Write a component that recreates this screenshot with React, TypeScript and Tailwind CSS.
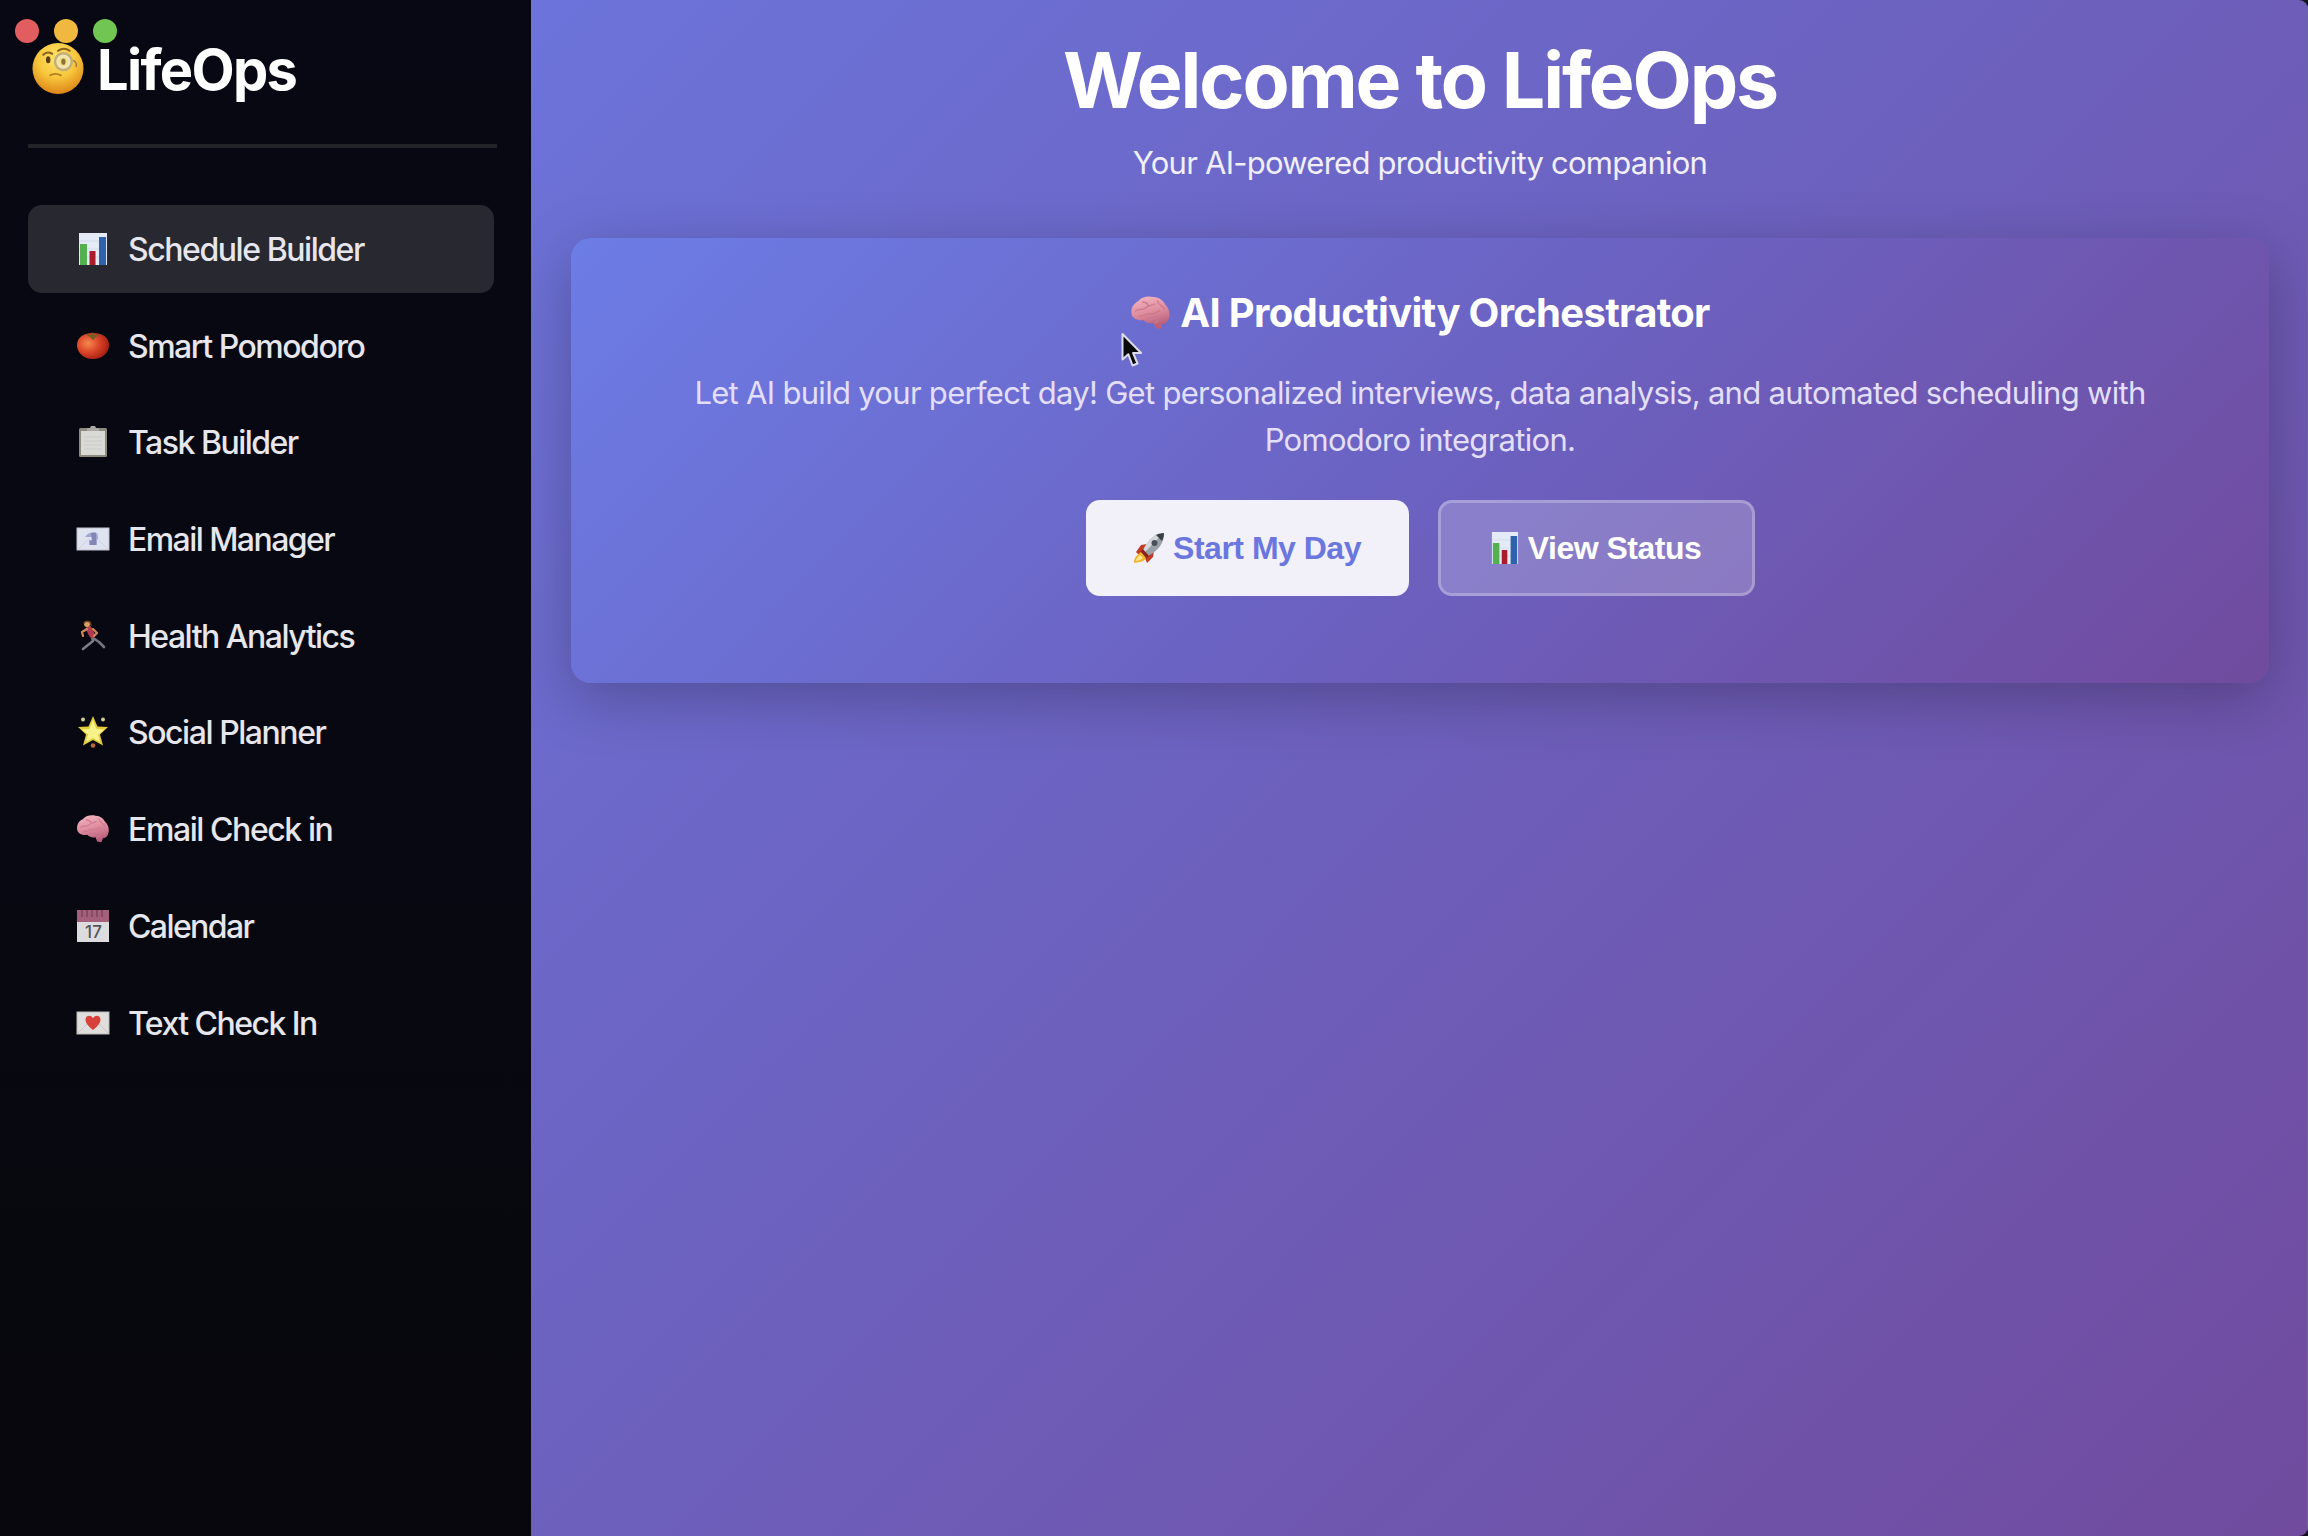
import type { ReactNode } from "react";

type IconProps = { className?: string };

const ChartIcon = ({ className }: IconProps) => (
  <svg viewBox="0 0 30 34" className={className} preserveAspectRatio="none">
    <rect x="1" y="1" width="28" height="32" fill="#e4ebf6" />
    <path d="M1 9H29M1 17H29M1 25H29" stroke="#d3dcea" strokeWidth="1" />
    <rect x="2" y="12" width="7" height="21" fill="#55b04f" />
    <rect x="11.500" y="19" width="6" height="14" fill="#a81c2c" />
    <rect x="21" y="5" width="7" height="28" fill="#2f62ad" />
  </svg>
);

const TomatoIcon = ({ className }: IconProps) => (
  <svg viewBox="0 0 34 34" className={className}>
    <defs>
      <radialGradient id="tomato" cx="35%" cy="40%" r="70%">
        <stop offset="0" stopColor="#f58a4e" />
        <stop offset=".45" stopColor="#dd4a2c" />
        <stop offset="1" stopColor="#a3190f" />
      </radialGradient>
    </defs>
    <path d="M1 16C1 8 8 4 17 4s16 4 16 12-7 14-16 14S1 24 1 16Z" fill="url(#tomato)" />
    <path d="M9 5l6 1 1-3 3 3 6-1-5 3-3 3-3-3Z" fill="#7a5a25" />
  </svg>
);

const ClipboardIcon = ({ className }: IconProps) => (
  <svg viewBox="0 0 30 34" className={className}>
    <rect x="1" y="3" width="28" height="29" rx="1.500" fill="#8e8a80" />
    <rect x="3" y="6" width="24" height="24" fill="#d9d9d6" />
    <path d="M9 6V3h3l1-2h4l1 2h3v3Z" fill="#aaa9a5" />
    <path d="M6 12H24M6 16H24M6 20H24M6 24H24" stroke="#cbcbc9" strokeWidth="1" />
  </svg>
);

const EmailIcon = ({ className }: IconProps) => (
  <svg viewBox="0 0 34 24" className={className}>
    <rect x="1" y="1" width="32" height="22" fill="#dfe2ef" stroke="#c0c3d2" />
    <path d="M2 22L13 12M32 22L21 12" stroke="#cfd2e2" />
    <path d="M9 10c3-4 6-4.500 9-5 3 0 4 3 4 5v2h-1v6h-8v-5h4v-3Z" fill="#a3a5d2" />
    <path d="M15 6h5v12h-6v-4h2Z" fill="#8386b5" />
  </svg>
);

const RunnerIcon = ({ className }: IconProps) => (
  <svg viewBox="0 0 28 32" className={className} fill="none" strokeLinecap="round" strokeLinejoin="round">
    <path d="M13 16l1 5-5 4-5 4" stroke="#7d7c80" strokeWidth="2.600" />
    <path d="M14 18l6 4 5 5" stroke="#77767c" strokeWidth="2.600" />
    <path d="M10 9l3 6" stroke="#b53a50" strokeWidth="6" />
    <path d="M8 9l-5 3 1 4M14 9l4 4-3 3" stroke="#d08a58" strokeWidth="2.200" />
    <circle cx="8" cy="4" r="3" fill="#d9a15e" />
    <path d="M5 3q2-3 6-1l1 3" stroke="#6b4027" strokeWidth="1.500" />
  </svg>
);

const StarIcon = ({ className }: IconProps) => (
  <svg viewBox="0 0 32 34" className={className}>
    <path d="M16 1l4.500 10.500L31 12l-8 7.500 3 11L16 25 6 30.500l3-11L1 12l10.500-.5Z" fill="#e3cb3e" />
    <path d="M16 5l3.500 9 8 .5-6.500 5 2.200 7.500L16 23l-7.200 4L11 19.500l-6.500-5 8-.5Z" fill="#f7f28a" />
    <circle cx="6" cy="4.500" r="2" fill="#cfd08b" />
    <circle cx="26" cy="4.500" r="2" fill="#cfd08b" />
    <circle cx="16" cy="30.500" r="2.300" fill="#b86a32" />
  </svg>
);

const BrainIcon = ({ className }: IconProps) => (
  <svg viewBox="0 0 40 36" className={className}>
    <defs>
      <linearGradient id="brain" x1="0" y1="0" x2=".3" y2="1">
        <stop offset="0" stopColor="#f4b9c2" />
        <stop offset=".55" stopColor="#e08d9f" />
        <stop offset="1" stopColor="#b9607c" />
      </linearGradient>
    </defs>
    <path
      d="M1 19C0 12 4 8 8 6 12 1 19 1 23 2c6 0 10 4 12 8 4 4 5 10 3 14-1 4-4 5-6 5l-2 5-5-1-2-5c-5 1-8-1-10-3-5 1-11-1-12-6Z"
      fill="url(#brain)"
    />
    <path
      d="M5 16c4-3 7 0 10-3s6-2 9-4M12 7c3 0 5 1 6 4M9 21c4 1 6-3 10-2s6-2 10-3M20 25c3-3 7-1 12-4M27 6c0 4 5 4 7 8M25 28l3-3"
      stroke="#cb7a90"
      strokeWidth="1.300"
      fill="none"
      strokeLinecap="round"
    />
  </svg>
);

const CalendarIcon = ({ className }: IconProps) => (
  <svg viewBox="0 0 34 34" className={className}>
    <rect x="1" y="1" width="32" height="32" fill="#dcdcdf" />
    <rect x="1" y="1" width="32" height="12" fill="#a4607a" />
    <path d="M6 1v7M11 1v7M16 1v7M21 1v7M26 1v7" stroke="#7c4460" strokeWidth="1.500" />
    <text x="17.500" y="29" textAnchor="middle" fontFamily="Inter, sans-serif" fontSize="17" fontWeight="500" fill="#55555b">
      17
    </text>
  </svg>
);

const LoveLetterIcon = ({ className }: IconProps) => (
  <svg viewBox="0 0 34 24" className={className}>
    <rect x="1" y="1" width="32" height="22" fill="#e0dedd" stroke="#bdbbb9" />
    <path d="M2 22L12 12M32 22L22 12" stroke="#cbc8c6" />
    <path d="M17 19C12 15 9.500 12 9.500 8.500c0-4 5-5 7.500-1.500 2.500-3.500 7.500-2.500 7.500 1.500C24.500 12 22 15 17 19Z" fill="#d8403a" />
  </svg>
);

const RocketIcon = ({ className }: IconProps) => (
  <svg viewBox="0 0 32 32" className={className}>
    <path d="M3 20l5-7 6-1-7 12ZM12 26l9-8-1 7-6 6Z" fill="#c33a24" />
    <path d="M31 1c-9 0-15 6-21 17l5 6C26 18 31 11 31 1Z" fill="#9aa0a8" />
    <path d="M31 1c-9 0-15 6-21 17l2 2C19 13 24 7 31 1Z" fill="#d4d8dd" />
    <path d="M31 1c-3 0-6 1-8 2l6 6c1-2 2-5 2-8Z" fill="#3b3f47" />
    <circle cx="21.500" cy="11" r="3" fill="#49505b" />
    <path d="M10 17l6 7-3 3-6-7Z" fill="#8d241d" />
    <path d="M8 20l5 6c-2 4-6 4-12 5 0-6 3-8 7-11Z" fill="#f1b52f" />
    <path d="M7 23l3 3c-2 2-4 2-7 3 0-3 2-4 4-6Z" fill="#fbe98a" />
  </svg>
);

const MonocleIcon = ({ className }: IconProps) => (
  <svg viewBox="0 0 54 54" className={className} fill="none" strokeLinecap="round">
    <defs>
      <radialGradient id="face" cx="48%" cy="30%" r="68%">
        <stop offset="0" stopColor="#fde56c" />
        <stop offset=".55" stopColor="#f8c73c" />
        <stop offset="1" stopColor="#df8a1a" />
      </radialGradient>
    </defs>
    <circle cx="27" cy="27" r="26" fill="url(#face)" />
    <path d="M12 13q4-4 9-1" stroke="#8a611e" strokeWidth="2.200" />
    <ellipse cx="17" cy="18" rx="2.300" ry="3.600" fill="#5c3c16" />
    <path d="M27 9q6-4 12 0" stroke="#8a611e" strokeWidth="2" />
    <circle cx="32.500" cy="20" r="8.500" fill="#f5e08d" stroke="#c2af7c" strokeWidth="2.500" />
    <circle cx="32.500" cy="20" r="6" stroke="#efe7c4" strokeWidth="1.500" />
    <ellipse cx="32.500" cy="20" rx="2.200" ry="3.200" fill="#8d7434" />
    <path d="M43 19q3.500 2 2.500 6" stroke="#a3803a" strokeWidth="1.600" />
    <path d="M19 34q5-3 11 0" stroke="#b07f24" strokeWidth="1.800" />
  </svg>
);

const CursorIcon = ({ className }: IconProps) => (
  <svg viewBox="0 0 22 36" className={className}>
    <path
      d="M1.500 2v25.500l5.800-5.300 4.200 11.300 5-2-4.400-10.500h8Z"
      fill="#0a0a0c"
      stroke="#dcdcea"
      strokeWidth="2"
      strokeLinejoin="round"
    />
  </svg>
);

const navItems: { label: string; icon: ReactNode; spacing: string }[] = [
  { label: "Schedule Builder", icon: <ChartIcon className="h-[34px] w-[30px]" />, spacing: "tracking-[-1.44px]" },
  { label: "Smart Pomodoro", icon: <TomatoIcon className="size-[34px]" />, spacing: "tracking-[-1.49px]" },
  { label: "Task Builder", icon: <ClipboardIcon className="h-[34px] w-[30px]" />, spacing: "tracking-[-1.5px]" },
  { label: "Email Manager", icon: <EmailIcon className="h-6 w-[34px]" />, spacing: "tracking-[-1.56px]" },
  { label: "Health Analytics", icon: <RunnerIcon className="h-8 w-7" />, spacing: "tracking-[-1.5px]" },
  { label: "Social Planner", icon: <StarIcon className="h-[34px] w-8" />, spacing: "tracking-[-1.45px]" },
  { label: "Email Check in", icon: <BrainIcon className="h-[30px] w-[34px]" />, spacing: "tracking-[-1.42px]" },
  { label: "Calendar", icon: <CalendarIcon className="size-[34px]" />, spacing: "tracking-[-1.6px]" },
  { label: "Text Check In", icon: <LoveLetterIcon className="h-6 w-[34px]" />, spacing: "tracking-[-1.54px]" },
];

const WindowControls = () => (
  <div className="absolute top-[19px] left-[15px] flex gap-[15px]">
    <span className="size-6 rounded-full bg-[#e25d5f]" />
    <span className="size-6 rounded-full bg-[#f0b83f]" />
    <span className="size-6 rounded-full bg-[#70c553]" />
  </div>
);

const Sidebar = () => (
  <aside className="relative w-[531px] shrink-0 bg-linear-to-b from-[#070813] via-[#070811] to-[#08070d] pr-[37px] pl-7">
    <WindowControls />
    <div className="relative mr-[-3px] flex h-[148px] items-start border-b-4 border-[#222229] pt-[42px] pl-[3px]">
      <MonocleIcon className="h-[53px] w-[54px]" />
      <h1 className="mt-[2px] ml-3 text-[56px] leading-[53px] font-bold tracking-[-1.7px] text-white">LifeOps</h1>
    </div>
    <nav className="mt-[57px] flex flex-col gap-[8.7px]">
      {navItems.map((item, index) => (
        <a
          key={item.label}
          className={`flex h-22 items-center rounded-[14px] pl-[48px] ${index === 0 ? "bg-[#282831]" : ""}`}
        >
          <span className="flex w-[34px] justify-center">{item.icon}</span>
          <span className={`mt-[2px] ml-[18px] text-[32px] font-medium whitespace-nowrap text-[#e6e6ec] ${item.spacing}`}>
            {item.label}
          </span>
        </a>
      ))}
    </nav>
  </aside>
);

const HeroCard = () => (
  <section className="mt-[53px] flex h-[445px] flex-col items-center rounded-[20px] bg-linear-135 from-[#6c7de6] via-[#6b62c2] to-[#704b9e] pt-[47px] text-center shadow-[0_15px_58px_rgba(0,0,0,0.25)]">
    <h3 className="flex h-[56px] items-center text-[40px] font-bold tracking-[-0.7px] text-white">
      <BrainIcon className="mr-[9px] h-9 w-[41px]" />
      AI Productivity Orchestrator
    </h3>
    <p className="mt-[29px] text-[31px] leading-[46.600px] tracking-[-0.7px] whitespace-nowrap text-[#e3dffa]">
      Let AI build your perfect day! Get personalized interviews, data analysis, and automated scheduling with
      <br />
      Pomodoro integration.
    </p>
    <div className="mt-[37px] flex gap-[29px] font-['Liberation_Sans',sans-serif] text-[32px] font-bold tracking-[-0.5px]">
      <button className="flex h-24 w-[323px] items-center justify-center rounded-[14px] bg-[#f2f1f9] text-[#6c76df]">
        <RocketIcon className="mr-[8px] size-8" />
        <span>Start My Day</span>
      </button>
      <button className="flex h-24 w-[317px] items-center justify-center rounded-[14px] border-[3px] border-white/25 bg-white/20 text-white">
        <ChartIcon className="mr-[9px] h-[34px] w-7" />
        <span>View Status</span>
      </button>
    </div>
  </section>
);

export default function App() {
  return (
    <div className="h-[1536px] w-[2308px] bg-[#14141c]">
      <div className="relative flex h-full overflow-hidden rounded-r-[9px] bg-linear-135 from-[#6b7ae4] via-[#6c62c0] to-[#704b9e] font-['Inter',sans-serif]">
        <Sidebar />
        <main className="flex-1 overflow-hidden border-r border-[#6d6788] pr-[38px] pl-[40px]">
          <header className="flex flex-col items-center pt-[34px] text-center text-white">
            <h2 className="h-[92px] text-[77px] leading-[92px] font-bold tracking-[-2.15px] whitespace-nowrap">
              Welcome to LifeOps
            </h2>
            <p className="mt-[13px] h-[46px] text-[31px] leading-[48px] tracking-[-0.75px] text-[#f1effc]">
              Your AI-powered productivity companion
            </p>
          </header>
          <HeroCard />
        </main>
        <CursorIcon className="pointer-events-none absolute top-[332px] left-[1121px] h-9 w-[22px]" />
      </div>
    </div>
  );
}
